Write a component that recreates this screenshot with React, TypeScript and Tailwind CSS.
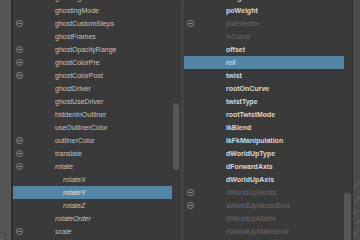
import React from "react";

type Row = {
  label: string;
  icon?: boolean;
  italic?: boolean;
  indent?: boolean;
  selected?: boolean;
  kind?: "normal" | "bold" | "dim";
};

const leftRows: Row[] = [
  { label: "ghosting" },
  { label: "ghostingMode" },
  { label: "ghostCustomSteps", icon: true },
  { label: "ghostFrames" },
  { label: "ghostOpacityRange", icon: true },
  { label: "ghostColorPre", icon: true },
  { label: "ghostColorPost", icon: true },
  { label: "ghostDriver" },
  { label: "ghostUseDriver" },
  { label: "hiddenInOutliner" },
  { label: "useOutlinerColor" },
  { label: "outlinerColor", icon: true },
  { label: "translate", icon: true },
  { label: "rotate", icon: true, italic: true },
  { label: "rotateX", italic: true, indent: true },
  { label: "rotateY", italic: true, indent: true, selected: true },
  { label: "rotateZ", italic: true, indent: true },
  { label: "rotateOrder", italic: true },
  { label: "scale", icon: true, italic: true },
];

const rightRows: Row[] = [
  { label: "weight", kind: "bold" },
  { label: "poWeight", kind: "bold" },
  { label: "poleVector", kind: "dim", icon: true },
  { label: "inCurve", kind: "dim" },
  { label: "offset", kind: "bold" },
  { label: "roll", italic: true, selected: true },
  { label: "twist", kind: "bold" },
  { label: "rootOnCurve", kind: "bold" },
  { label: "twistType", kind: "bold" },
  { label: "rootTwistMode", kind: "bold" },
  { label: "ikBlend", kind: "bold" },
  { label: "ikFkManipulation", kind: "bold" },
  { label: "dWorldUpType", kind: "bold" },
  { label: "dForwardAxis", kind: "bold" },
  { label: "dWorldUpAxis", kind: "bold" },
  { label: "dWorldUpVector", kind: "dim", icon: true },
  { label: "dWorldUpVectorEnd", kind: "dim", icon: true },
  { label: "dWorldUpMatrix", kind: "dim" },
  { label: "dWorldUpMatrixEnd", kind: "dim" },
];

function MinusCircle() {
  return (
    <svg width="7" height="7" viewBox="0 0 7 7">
      <circle cx="3.5" cy="3.5" r="3" fill="none" stroke="#8a8a8a" strokeWidth="1" />
      <line x1="1.8" y1="3.5" x2="5.2" y2="3.5" stroke="#8a8a8a" strokeWidth="1" />
    </svg>
  );
}

function RowView({ r }: { r: Row }) {
  const color = r.selected
    ? "text-[#e4e4e4]"
    : r.kind === "bold"
    ? "text-[#d8d8d8] font-bold"
    : r.kind === "dim"
    ? "text-[#6c6c6c]"
    : "text-[#c2c2c2]";
  return (
    <div className={`h-[13px] flex items-center ${r.selected ? "bg-[#5285a6]" : ""}`}>
      <div className="w-[42px] h-[13px] flex items-center pl-[3px] shrink-0">
        {r.icon ? <MinusCircle /> : null}
      </div>
      <div
        className={`whitespace-nowrap leading-none ${color} ${r.italic ? "italic" : ""} ${
          r.indent ? "pl-[8px]" : ""
        }`}
      >
        {r.label}
      </div>
    </div>
  );
}

export default function App() {
  return (
    <div className="w-[360px] h-[240px] flex overflow-hidden bg-[#3a3a3a] font-['Liberation_Sans',Arial,sans-serif] text-[7px]">
      <div className="w-[11px] h-full bg-[#565656] flex flex-col justify-end shrink-0">
        <svg width="11" height="10" viewBox="0 0 11 10">
          <path d="M0 3 H6 V10" fill="none" stroke="#444" strokeWidth="1" />
        </svg>
      </div>
      <div className="w-[2px] h-full bg-[#2f2f2f] shrink-0" />
      <div className="w-[167px] h-full flex shrink-0 bg-[#3a3a3a]">
        <div className="w-[159px] flex flex-col mt-[-9px]">
          {leftRows.map((r) => (
            <RowView key={r.label} r={r} />
          ))}
        </div>
        <div className="w-[8px] flex flex-col">
          <div className="h-[103px] shrink-0" />
          <div className="ml-[1px] w-[6px] h-[67px] rounded-[3px] bg-[#575757]" />
        </div>
      </div>
      <div className="w-[4px] h-full bg-[#3e3e3e] flex justify-center shrink-0">
        <div className="w-0 h-full border-l border-dotted border-[#5a5a5a]" />
      </div>
      <div className="w-[168px] h-full flex shrink-0 bg-[#3a3a3a]">
        <div className="w-[160px] flex flex-col mt-[-9px]">
          {rightRows.map((r) => (
            <RowView key={r.label} r={r} />
          ))}
        </div>
        <div className="w-[8px] flex flex-col">
          <div className="h-[193px] shrink-0" />
          <div className="w-[7px] h-[60px] rounded-t-[3px] bg-[#575757]" />
        </div>
      </div>
      <div className="w-[8px] h-full flex shrink-0">
        <div className="w-[1px] h-full bg-[#2e2e2e]" />
        <div className="w-[7px] h-full bg-[#4a4a4a] flex flex-col justify-end">
          <svg width="7" height="60" viewBox="0 0 7 60">
            <path d="M0 8 L7 2 M2 22 L7 16 M0 34 L4 30 M3 44 L7 40 M0 56 L6 50" stroke="#6a6a6a" strokeWidth="1" fill="none" />
          </svg>
        </div>
      </div>
    </div>
  );
}
